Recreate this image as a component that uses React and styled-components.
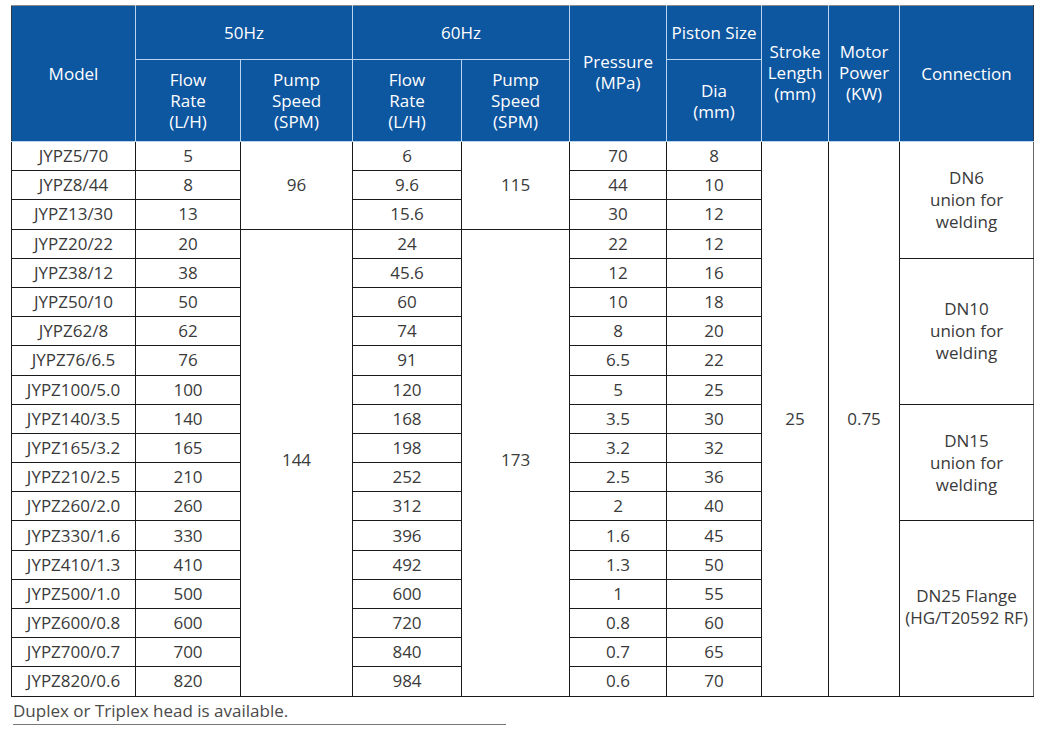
import React from "react";
import styled, { createGlobalStyle } from "styled-components";

const Global = createGlobalStyle`
  html, body { margin: 0; padding: 0; background: #fff; }
  body { font-family: "Open Sans", "Noto Sans", sans-serif; }
`;

const Page = styled.div`
  padding: 5px 0 0 11px;
  width: 1043px;
  height: 737px;
  box-sizing: border-box;
  overflow: hidden;
`;

const Table = styled.table`
  border-collapse: collapse;
  table-layout: fixed;
  width: 1022px;
  font-size: 17px;
  color: #3a3a3a;
`;

const Th = styled.th`
  background: #0d56a0;
  color: #fff;
  font-weight: 500;
  line-height: 21px;
  text-align: center;
  vertical-align: middle;
  padding: 0 0 ${(p) => p.$lift || 0}px;
  border: 1px solid #b8d4ee;
  border-top: 1px solid #8a8a8a;
  &:first-child { border-left: 1px solid #2a3a4a; }
  &:last-child { border-right: 1px solid #2a3a4a; }
`;

const SubTh = styled(Th)`
  border-top: 1px solid #b8d4ee;
  height: 81px;
`;

const TopTh = styled(Th)`
  height: 53px;
`;

const Td = styled.td`
  border: 1.5px solid #1a1a1a;
  text-align: center;
  vertical-align: middle;
  padding: 0 0 ${(p) => p.$lift || 0}px;
  line-height: 22px;
  white-space: nowrap;
  &:last-child { border-right-color: #666; }
`;

const Row = styled.tr`
  height: 29.2px;
`;

const Note = styled.div`
  margin-top: 4px;
  margin-left: 2px;
  width: 493px;
  font-size: 17px;
  color: #4a4a4a;
  line-height: 20px;
  padding-bottom: 3px;
  border-bottom: 1.5px solid #777;
`;

const widths = [124, 105, 112, 109, 108, 97, 95, 67, 71, 134];

const rows = [
  ["JYPZ5/70", "5", "6", "70", "8"],
  ["JYPZ8/44", "8", "9.6", "44", "10"],
  ["JYPZ13/30", "13", "15.6", "30", "12"],
  ["JYPZ20/22", "20", "24", "22", "12"],
  ["JYPZ38/12", "38", "45.6", "12", "16"],
  ["JYPZ50/10", "50", "60", "10", "18"],
  ["JYPZ62/8", "62", "74", "8", "20"],
  ["JYPZ76/6.5", "76", "91", "6.5", "22"],
  ["JYPZ100/5.0", "100", "120", "5", "25"],
  ["JYPZ140/3.5", "140", "168", "3.5", "30"],
  ["JYPZ165/3.2", "165", "198", "3.2", "32"],
  ["JYPZ210/2.5", "210", "252", "2.5", "36"],
  ["JYPZ260/2.0", "260", "312", "2", "40"],
  ["JYPZ330/1.6", "330", "396", "1.6", "45"],
  ["JYPZ410/1.3", "410", "492", "1.3", "50"],
  ["JYPZ500/1.0", "500", "600", "1", "55"],
  ["JYPZ600/0.8", "600", "720", "0.8", "60"],
  ["JYPZ700/0.7", "700", "840", "0.7", "65"],
  ["JYPZ820/0.6", "820", "984", "0.6", "70"],
];

const speeds = { 0: [3, "96", "115"], 3: [16, "144", "173"] };
const connections = {
  0: [4, ["DN6", "union for", "welding"]],
  4: [5, ["DN10", "union for", "welding"]],
  9: [4, ["DN15", "union for", "welding"]],
  13: [6, ["DN25 Flange", "(HG/T20592 RF)"]],
};

const Lines = ({ lines }) =>
  lines.map((l, i) => (
    <React.Fragment key={i}>
      {i > 0 && <br />}
      {l}
    </React.Fragment>
  ));

export default function App() {
  return (
    <Page>
      <Global />
      <Table>
        <colgroup>
          {widths.map((w, i) => (
            <col key={i} style={{ width: w }} />
          ))}
        </colgroup>
        <thead>
          <tr>
            <TopTh rowSpan={2}>Model</TopTh>
            <TopTh colSpan={2}>50Hz</TopTh>
            <TopTh colSpan={2}>60Hz</TopTh>
            <TopTh rowSpan={2} $lift={3}>
              <Lines lines={["Pressure", "(MPa)"]} />
            </TopTh>
            <TopTh>Piston Size</TopTh>
            <TopTh rowSpan={2} $lift={2}>
              <Lines lines={["Stroke", "Length", "(mm)"]} />
            </TopTh>
            <TopTh rowSpan={2} $lift={3}>
              <Lines lines={["Motor", "Power", "(KW)"]} />
            </TopTh>
            <TopTh rowSpan={2}>Connection</TopTh>
          </tr>
          <tr>
            <SubTh>
              <Lines lines={["Flow", "Rate", "(L/H)"]} />
            </SubTh>
            <SubTh>
              <Lines lines={["Pump", "Speed", "(SPM)"]} />
            </SubTh>
            <SubTh>
              <Lines lines={["Flow", "Rate", "(L/H)"]} />
            </SubTh>
            <SubTh>
              <Lines lines={["Pump", "Speed", "(SPM)"]} />
            </SubTh>
            <SubTh>
              <Lines lines={["Dia", "(mm)"]} />
            </SubTh>
          </tr>
        </thead>
        <tbody>
          {rows.map((r, i) => (
            <Row key={r[0]}>
              <Td>{r[0]}</Td>
              <Td>{r[1]}</Td>
              {speeds[i] && (
                <Td rowSpan={speeds[i][0]} $lift={i ? 6 : 0}>
                  {speeds[i][1]}
                </Td>
              )}
              <Td>{r[2]}</Td>
              {speeds[i] && (
                <Td rowSpan={speeds[i][0]} $lift={i ? 6 : 0}>
                  {speeds[i][2]}
                </Td>
              )}
              <Td>{r[3]}</Td>
              <Td>{r[4]}</Td>
              {i === 0 && <Td rowSpan={19}>25</Td>}
              {i === 0 && <Td rowSpan={19}>0.75</Td>}
              {connections[i] && (
                <Td rowSpan={connections[i][0]} $lift={i === 13 ? 4 : 0}>
                  <Lines lines={connections[i][1]} />
                </Td>
              )}
            </Row>
          ))}
        </tbody>
      </Table>
      <Note>Duplex or Triplex head is available.</Note>
    </Page>
  );
}
